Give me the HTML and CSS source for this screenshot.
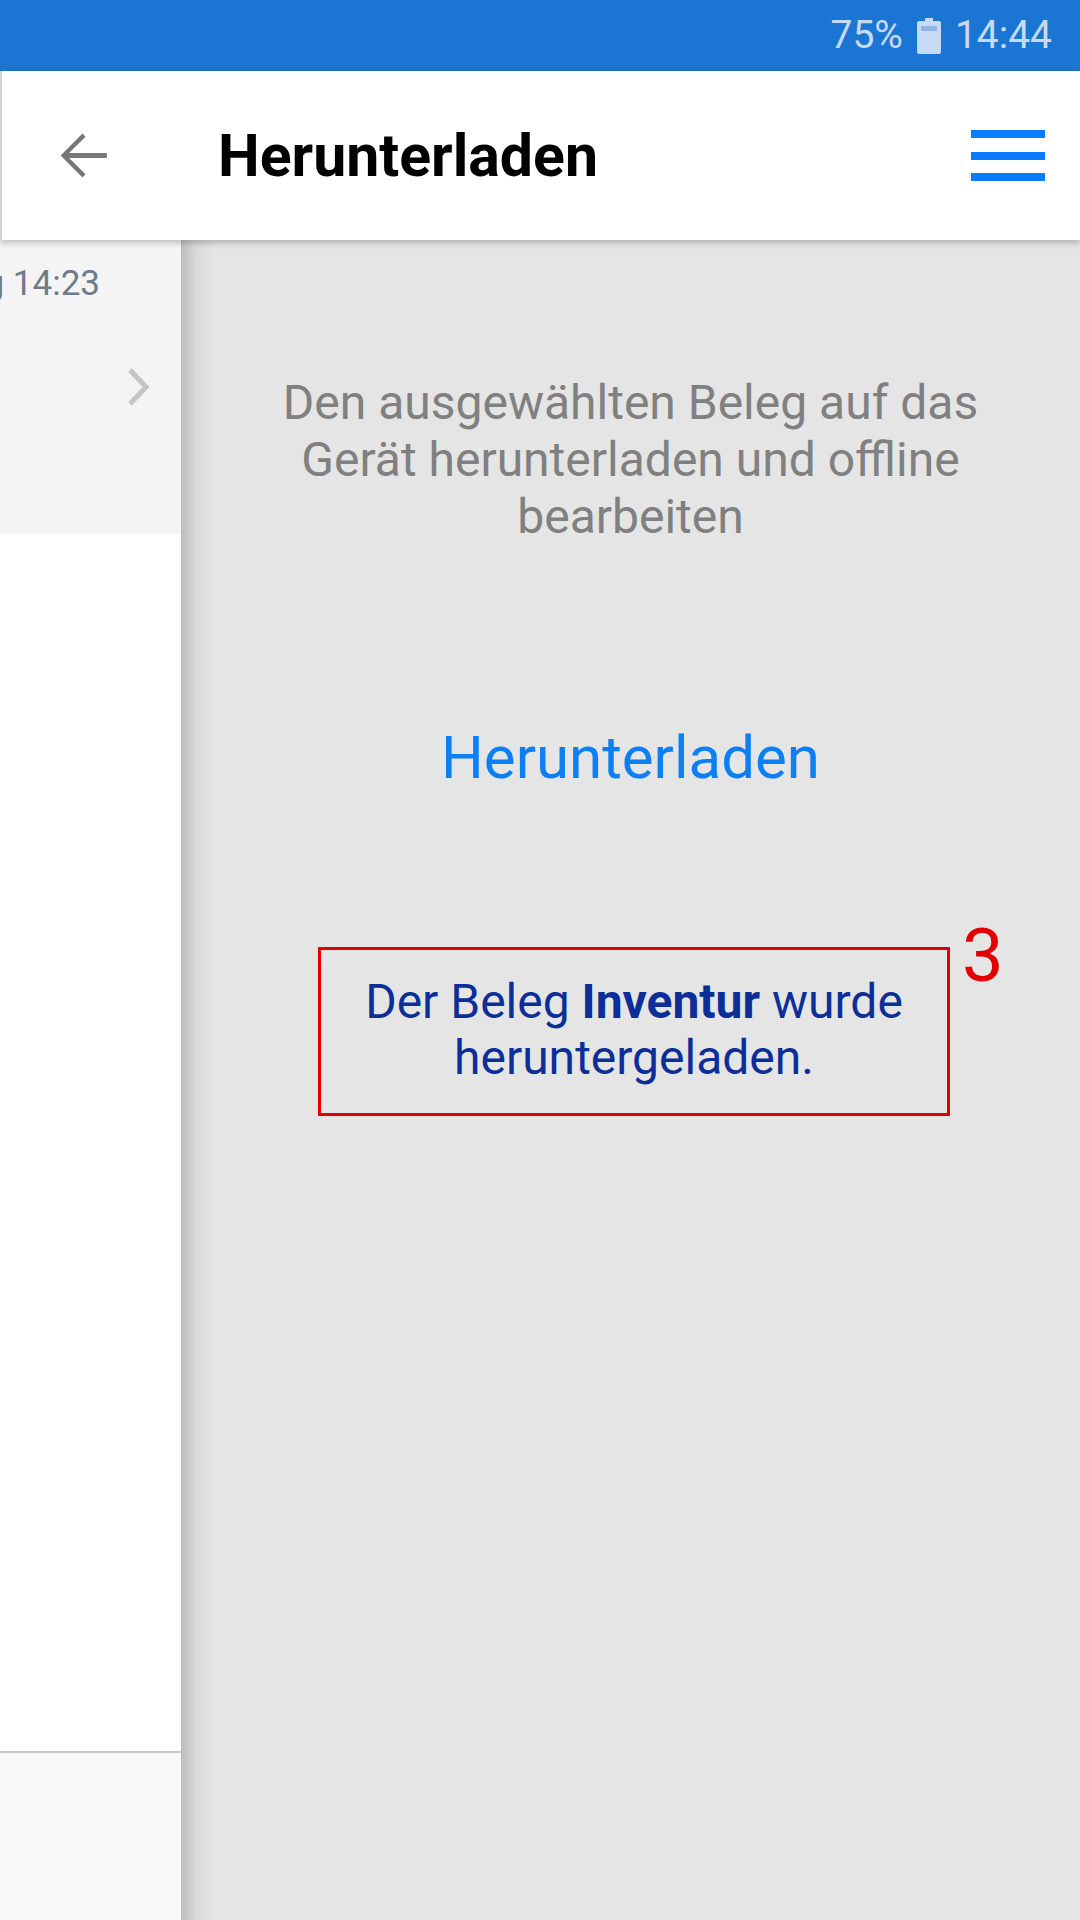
FILE: index.html
```html
<!DOCTYPE html>
<html lang="de">
<head>
  <meta charset="UTF-8" />
  <title>Herunterladen</title>
  <meta name="viewport" content="width=device-width, initial-scale=1.0" />
  <link rel="stylesheet" href="styles.css">
</head>
<body>
  <!-- Status bar -->
  <div class="statusbar">
    <span class="status-text">75%</span>
    <svg class="battery" width="24" height="36" viewBox="0 0 24 36">
      <rect x="8" y="0" width="8" height="4" fill="#c6dbf3" />
      <rect x="0" y="3" width="24" height="33" rx="2" fill="#c6dbf3" />
      <rect x="4" y="8" width="16" height="5" fill="#8fb6e6" />
    </svg>
    <span class="status-text">14:44</span>
  </div>

  <!-- Toolbar -->
  <header class="toolbar">
    <a class="back-btn" href="#">
      <svg width="73" height="73" viewBox="0 0 24 24">
        <path d="M20 11.2H7.6l5.4-5.4L12 4.8 4.8 12l7.2 7.2 1-1-5.4-5.4H20z" fill="#777" />
      </svg>
    </a>
    <h1 class="title">Herunterladen</h1>
    <a class="menu-btn" href="#">
      <span></span>
      <span></span>
      <span></span>
    </a>
  </header>

  <div class="split">
    <!-- Belegliste (halb verdeckt) -->
    <aside class="list">
      <div class="list-row">
        <div class="row-text">
          <span class="row-date">Montag 14:23</span>
        </div>
        <svg class="chevron" width="23" height="40" viewBox="0 0 23 40">
          <polyline points="3,3 19,20 3,37" fill="none" stroke="#c4c4c4" stroke-width="5" />
        </svg>
      </div>
      <div class="list-body"></div>
      <div class="list-footer"></div>
    </aside>

    <!-- Detail -->
    <main class="detail">
      <p class="detail-text">Den ausgewählten Beleg auf das Gerät herunterladen und offline bearbeiten</p>
      <a class="download-link" href="#">Herunterladen</a>
      <div class="notice">
        Der Beleg <b>Inventur</b> wurde<br>heruntergeladen.
        <span class="marker">3</span>
      </div>
    </main>
  </div>
</body>
</html>
```

FILE: styles.css
```css
:root {
  --blue: #1a76d2;
  --status-text: #c6dbf3;
  --link: #0d7ff5;
  --pane: #e5e5e5;
  --red: #e00000;
  --navy: #0b2e99;
}

* { box-sizing: border-box; }

body {
  font-family: Roboto, "Noto Sans", sans-serif;
  margin: 0;
  width: 1080px;
  height: 1920px;
  overflow: hidden;
  background-color: #fff;
  display: flex;
  flex-direction: column;
}

/* Status bar */
.statusbar {
  height: 71px;
  background-color: var(--blue);
  display: flex;
  justify-content: flex-end;
  align-items: center;
  gap: 14px;
  padding-right: 28px;
}

.status-text {
  color: var(--status-text);
  font-size: 39px;
  line-height: 1;
}

.battery { display: block; }

/* Toolbar */
.toolbar {
  position: relative;
  z-index: 2;
  height: 169px;
  background-color: #fff;
  border-left: 2px solid #d4d4d4;
  box-shadow: 0 3px 6px rgba(0, 0, 0, 0.22);
  display: flex;
  align-items: center;
  padding: 0 35px 0 44px;
}

.back-btn {
  display: flex;
  margin-right: 99px;
}

.title {
  flex: 1;
  margin: 0;
  font-size: 59px;
  font-weight: 700;
  color: #000;
}

.menu-btn {
  display: flex;
  flex-direction: column;
  gap: 13.5px;
}

.menu-btn span {
  display: block;
  width: 74px;
  height: 8px;
  background-color: #0a7cff;
}

/* Split view */
.split {
  flex: 1;
  display: flex;
}

.list {
  width: 181px;
  display: flex;
  flex-direction: column;
  background-color: #fff;
}

.list-row {
  height: 294px;
  background-color: #f4f4f4;
  display: flex;
  align-items: center;
}

.row-text {
  align-self: flex-start;
  flex: 1;
  display: flex;
  justify-content: flex-end;
  overflow: hidden;
  padding-top: 22px;
}

.row-date {
  white-space: nowrap;
  font-size: 35px;
  line-height: 44px;
  color: #6d7b8c;
}

.chevron {
  margin: 0 31px 0 27px;
}

.list-body { flex: 1; }

.list-footer {
  height: 169px;
  border-top: 2px solid #c8c8c8;
  background-color: #f8f8f8;
}

.detail {
  flex: 1;
  background-color: var(--pane);
  background-image: linear-gradient(to right, rgba(0, 0, 0, 0.18), rgba(0, 0, 0, 0.06) 14px, rgba(0, 0, 0, 0) 34px);
  text-align: center;
  display: flex;
  flex-direction: column;
}

.detail-text {
  margin: 134px 60px 0;
  font-size: 48px;
  line-height: 57px;
  color: #808080;
}

.download-link {
  margin-top: 178px;
  font-size: 60px;
  line-height: 70px;
  color: var(--link);
  text-decoration: none;
}

.notice {
  position: relative;
  width: 632px;
  margin: 154px 0 0 137px;
  padding: 24px 0 27px;
  border: 3px solid var(--red);
  font-size: 48px;
  line-height: 56px;
  color: var(--navy);
}

.notice b { font-weight: 700; }

.marker {
  position: absolute;
  left: calc(100% + 15px);
  top: -31px;
  font-size: 74px;
  line-height: 74px;
  color: var(--red);
}
```
